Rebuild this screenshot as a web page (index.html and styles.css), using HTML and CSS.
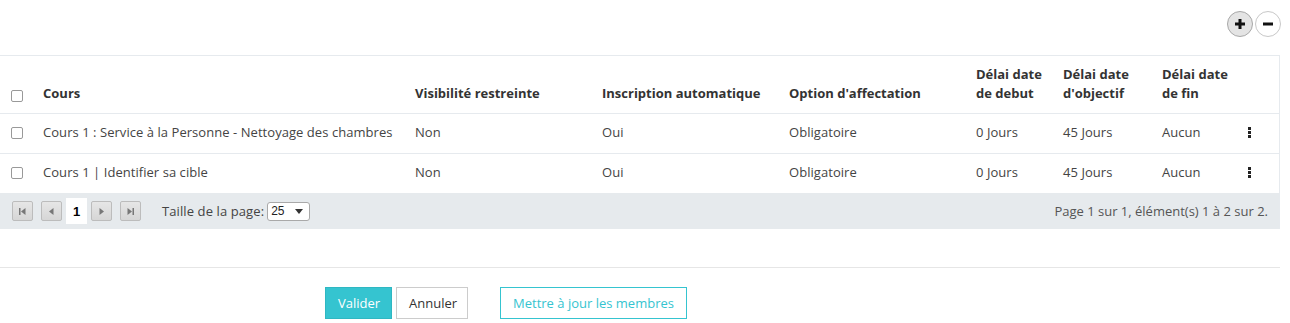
FILE: index.html
```html
<!DOCTYPE html>
<html lang="fr">
<head>
<meta charset="utf-8">
<link rel="stylesheet" href="styles.css">
</head>
<body>
<div class="toolbar">
  <button class="circle circle-plus" aria-label="Ajouter">
    <svg width="12" height="12" viewBox="0 0 12 12"><path d="M6 1v10M1 6h10" stroke="#111" stroke-width="3"/></svg>
  </button>
  <button class="circle circle-minus" aria-label="Retirer">
    <svg width="12" height="12" viewBox="0 0 12 12"><path d="M1 6h10" stroke="#111" stroke-width="3"/></svg>
  </button>
</div>

<div class="grid">
  <table class="table">
    <colgroup>
      <col class="c-check"><col class="c-cours"><col class="c-mid"><col class="c-mid"><col class="c-mid">
      <col class="c-deb"><col class="c-obj"><col class="c-fin"><col class="c-act">
    </colgroup>
    <thead>
      <tr>
        <th class="check-cell"><span class="checkbox"></span></th>
        <th>Cours</th>
        <th>Visibilité restreinte</th>
        <th>Inscription automatique</th>
        <th>Option d'affectation</th>
        <th>Délai date<br>de debut</th>
        <th>Délai date<br>d'objectif</th>
        <th>Délai date<br>de fin</th>
        <th></th>
      </tr>
    </thead>
    <tbody>
      <tr>
        <td class="check-cell"><span class="checkbox"></span></td>
        <td>Cours 1 : Service à la Personne - Nettoyage des chambres</td>
        <td>Non</td>
        <td>Oui</td>
        <td>Obligatoire</td>
        <td>0 Jours</td>
        <td>45 Jours</td>
        <td>Aucun</td>
        <td><span class="kebab"><i></i><i></i><i></i></span></td>
      </tr>
      <tr>
        <td class="check-cell"><span class="checkbox"></span></td>
        <td>Cours 1 | Identifier sa cible</td>
        <td>Non</td>
        <td>Oui</td>
        <td>Obligatoire</td>
        <td>0 Jours</td>
        <td>45 Jours</td>
        <td>Aucun</td>
        <td><span class="kebab"><i></i><i></i><i></i></span></td>
      </tr>
    </tbody>
  </table>
  <div class="pager">
    <div class="pager-nav">
      <span class="pbtn"><svg width="9" height="9" viewBox="0 0 9 9"><rect x="1" y="1" width="1.5" height="7" fill="#777"/><path d="M7.5 1v7L3 4.5z" fill="#777"/></svg></span>
      <span class="pbtn"><svg width="9" height="9" viewBox="0 0 9 9"><path d="M6.5 1v7L2 4.5z" fill="#777"/></svg></span>
      <span class="pcur">1</span>
      <span class="pbtn"><svg width="9" height="9" viewBox="0 0 9 9"><path d="M2.5 1v7L7 4.5z" fill="#777"/></svg></span>
      <span class="pbtn pbtn-last"><svg width="9" height="9" viewBox="0 0 9 9"><path d="M1.5 1v7L6 4.5z" fill="#777"/><rect x="6.5" y="1" width="1.5" height="7" fill="#777"/></svg></span>
      <span class="psize-label">Taille de la page:</span>
      <span class="select">25<svg width="8" height="5" viewBox="0 0 8 5"><path d="M0 0h8L4 5z" fill="#333"/></svg></span>
    </div>
    <div class="pager-info">Page 1 sur 1, élément(s) 1 à 2 sur 2.</div>
  </div>
</div>

<div class="actions">
  <button class="btn btn-primary">Valider</button>
  <button class="btn btn-default">Annuler</button>
  <button class="btn btn-outline">Mettre à jour les membres</button>
</div>
</body>
</html>
```

FILE: styles.css
```css
* { box-sizing: border-box; }
body {
  margin: 0;
  font-family: "Open Sans", "Liberation Sans", sans-serif;
  font-size: 13px;
  color: #444;
  background: #fff;
}
.toolbar {
  height: 55px;
  display: flex;
  justify-content: flex-end;
  align-items: flex-start;
  gap: 2px;
  padding: 11px 9px 0 0;
}
.circle {
  width: 26px;
  height: 26px;
  border-radius: 50%;
  padding: 0;
  display: flex;
  align-items: center;
  justify-content: center;
  cursor: pointer;
}
.circle-plus { background: #e4e4e4; border: 1px solid #a8a8a8; }
.circle-minus { background: #fff; border: 1px solid #c8c8c8; }

.grid {
  width: 1280px;
  border-top: 1px solid #e6eaee;
  border-right: 1px solid #e6eaee;
}
.table {
  width: 1279px;
  border-collapse: collapse;
  table-layout: fixed;
}
.c-check { width: 33px; }
.c-cours { width: 372px; }
.c-mid { width: 187px; }
.c-deb { width: 87px; }
.c-obj { width: 99px; }
.c-fin { width: 88px; }
.c-act { width: 39px; }

th, td {
  text-align: left;
  padding: 0 0 0 10px;
  border-bottom: 1px solid #e6eaee;
  white-space: nowrap;
}
th {
  height: 57px;
  vertical-align: bottom;
  padding-bottom: 10px;
  line-height: 19px;
  font-weight: 700;
  color: #333;
}
td {
  height: 40px;
  vertical-align: middle;
  line-height: 18px;
  padding-bottom: 2px;
  letter-spacing: 0.05px;
}
tbody tr:last-child td { border-bottom: none; }
.check-cell { padding-left: 11px; }
th.check-cell { padding-bottom: 11px; }
td.check-cell { padding-bottom: 1px; }
.checkbox {
  display: block;
  width: 12px;
  height: 12px;
  border: 1px solid #999;
  border-radius: 2px;
  background: #fff;
}
.kebab {
  display: flex;
  flex-direction: column;
  gap: 1px;
  width: 3px;
  margin-left: -2px;
}
.kebab i {
  display: block;
  width: 3px;
  height: 3px;
  background: #222;
}

.pager {
  height: 36px;
  background: #e6eaed;
  display: flex;
  align-items: center;
  justify-content: space-between;
  padding: 0 11px 0 12px;
}
.pager-nav {
  display: flex;
  align-items: center;
}
.pbtn {
  width: 21px;
  height: 20px;
  border: 1px solid #bcbcbc;
  border-radius: 2px;
  background: linear-gradient(#e6e6e6, #d6d6d6);
  display: flex;
  align-items: center;
  justify-content: center;
  margin-right: 8px;
}
.pcur {
  width: 21px;
  height: 26px;
  background: #fff;
  color: #000;
  font-weight: 700;
  display: flex;
  align-items: center;
  justify-content: center;
  margin: 0 4px 0 -4px;
  font-family: "Liberation Sans", Arial, sans-serif;
  font-size: 13px;
}
.pbtn-last { margin-right: 21px; }
.psize-label { color: #444; margin-right: 3px; letter-spacing: 0.1px; }
.select {
  width: 43px;
  height: 19px;
  border: 1px solid #a9a9a9;
  border-radius: 3px;
  background: #fff;
  display: flex;
  align-items: center;
  justify-content: space-between;
  padding: 0 6px 0 3px;
  font-family: "Liberation Sans", Arial, sans-serif;
  font-size: 12px;
  color: #222;
}
.pager-info { color: #555; }

.actions {
  margin-top: 38px;
  width: 1280px;
  border-top: 1px solid #e6e6e6;
  padding: 19px 0 0 325px;
  display: flex;
  gap: 4px;
}
.btn {
  height: 32px;
  font-family: "Open Sans", "Liberation Sans", sans-serif;
  font-size: 13px;
  padding: 0 12px;
  border-radius: 0;
  cursor: pointer;
}
.btn-primary { background: #35c4d0; border: 1px solid #2fb7c2; color: #fff; width: 67px; }
.btn-default { background: #fff; border: 1px solid #ccc; color: #333; width: 72px; }
.btn-outline { background: #fff; border: 1px solid #35c4d0; color: #35c4d0; width: 187px; margin-left: 28px; }
```
